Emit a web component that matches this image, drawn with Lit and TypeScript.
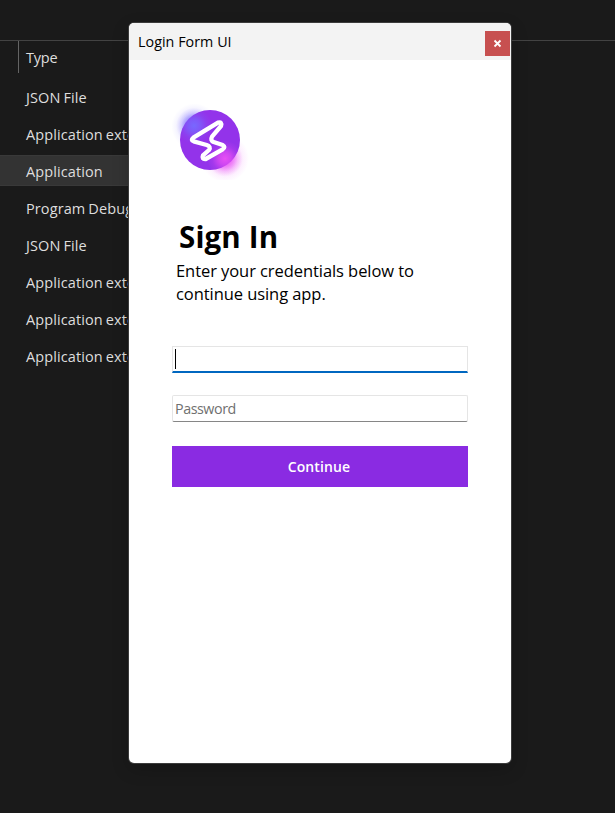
import { LitElement, html, css } from "lit";
import { customElement, property } from "lit/decorators.js";

@customElement("file-types")
class FileTypes extends LitElement {
  @property({ attribute: false }) rows: string[] = [];

  static styles = css`
    :host { display: block; padding-top: 40px; }
    .head {
      height: 39px; box-sizing: border-box; border-top: 1px solid #434343;
      display: flex; letter-spacing: -0.2px;
    }
    .head span {
      margin-left: 18px; padding-left: 7px; height: 32px; line-height: 33px;
      border-left: 1px solid #646464;
    }
    .row {
      width: 140px; height: 31px; line-height: 33px; margin-bottom: 6px; padding-left: 26px;
      box-sizing: border-box; white-space: nowrap; word-spacing: -0.9px;
    }
    .list { padding-top: 2px; }
    .selected { background: #333; box-shadow: inset 0 1px #393939, inset 0 -1px #393939; }
  `;

  render() {
    return html`
      <div class="head"><span>Type</span></div>
      <div class="list">
        ${this.rows.map((r) => html`<div class="row ${r === "Application" ? "selected" : ""}">${r}</div>`)}
      </div>
    `;
  }
}

@customElement("login-window")
class LoginWindow extends LitElement {
  static styles = css`
    :host {
      display: block; background: #fff; color: #000; border-radius: 5px;
      box-shadow: 0 0 0 1px #3c3c3c, 0 6px 18px rgba(0, 0, 0, 0.2);
      overflow: hidden;
    }
    .bar {
      height: 37px; background: #f3f3f3; display: flex; align-items: center;
      justify-content: space-between; padding: 0 1px 0 9px;
      box-sizing: border-box; font-size: 14.3px; letter-spacing: 0.04px;
    }
    .close {
      width: 25px; height: 25px; margin-top: 4px; background: #c75050;
      display: grid; place-items: center;
    }
    .content { padding: 40px 43px 0; }
    .logo { display: block; width: 80px; height: 80px; margin-left: -2px; }
    h1 {
      margin: 36px 0 0 7px; font-size: 29.5px; line-height: 42px;
      font-weight: 700; letter-spacing: 0.15px;
    }
    p {
      margin: 1px 0 0 4px; font-size: 16.5px; line-height: 23px;
      letter-spacing: -0.07px; white-space: nowrap;
    }
    .field {
      box-sizing: border-box; height: 27px; border: 1px solid #e5e5e5;
      border-radius: 2px; display: flex; align-items: center;
      padding-left: 2px; color: #707070; font-size: 14.3px;
      letter-spacing: -0.45px;
    }
    .user { margin-top: 41px; border-bottom: 2px solid #0067c0; border-radius: 0; }
    .pass { margin-top: 22px; border-bottom-color: #868686; }
    .caret { width: 1px; height: 20px; background: #000; }
    .continue {
      display: block; width: 100%; height: 41px; margin-top: 24px; padding: 0 2px 0 0;
      border: 0; background: #8a2be2; color: #fff;
      font: 600 14px "Open Sans", "Noto Sans", sans-serif; letter-spacing: 0.12px;
    }
  `;

  render() {
    return html`
      <div class="bar">
        <span>Login Form UI</span>
        <span class="close">
          <svg width="9" height="9" viewBox="0 0 9 9">
            <path d="M1.5 1.5 7.5 7.5M7.5 1.5 1.5 7.5" stroke="#fff" stroke-width="1.8" />
          </svg>
        </span>
      </div>
      <div class="content">
        <svg class="logo" viewBox="30 15 240 240">
          <defs>
            <radialGradient id="blue"><stop offset="0" stop-color="#7868ff" /><stop offset=".35" stop-color="#7868ff" stop-opacity=".7" /><stop offset=".7" stop-color="#7868ff" stop-opacity=".2" /><stop offset="1" stop-color="#7868ff" stop-opacity="0" /></radialGradient>
            <radialGradient id="pink"><stop offset="0" stop-color="#e84ff5" /><stop offset=".35" stop-color="#e84ff5" stop-opacity=".7" /><stop offset=".7" stop-color="#e84ff5" stop-opacity=".2" /><stop offset="1" stop-color="#e84ff5" stop-opacity="0" /></radialGradient>
          </defs>
          <circle cx="104" cy="95" r="70" fill="url(#blue)" opacity=".5" />
          <circle cx="195" cy="190" r="72" fill="url(#pink)" opacity=".5" />
          <circle cx="150" cy="135" r="90" fill="#9333ea" />
          <circle cx="102" cy="92" r="54" fill="url(#blue)" />
          <circle cx="195" cy="191" r="54" fill="url(#pink)" />
          <path
            d="M174 83 100 128Q91 135 101 139L140 150Q154 155 147 165L129 181Q124 193 137 192L188 163Q198 156 188 150L161 141Q150 136 156 125L183 93Q187 79 174 83Z"
            fill="none" stroke="#fff" stroke-width="13" stroke-linejoin="round" />
        </svg>
        <h1>Sign In</h1>
        <p>Enter your credentials below to<br />continue using app.</p>
        <div class="field user"><span class="caret"></span></div>
        <div class="field pass">Password</div>
        <button class="continue">Continue</button>
      </div>
    `;
  }
}

@customElement("app-root")
class AppRoot extends LitElement {
  static styles = css`
    :host {
      display: block; position: relative; width: 615px; height: 813px;
      overflow: hidden; background: #1a1a1a; color: #dedede;
      font: 14.5px "Open Sans", "Noto Sans", sans-serif; letter-spacing: 0.1px;
    }
    login-window {
      position: absolute; left: 129px; top: 23px; width: 382px; height: 740px;
    }
  `;

  render() {
    return html`
      <file-types .rows=${[
        "JSON File", "Application extension", "Application", "Program Debug Database",
        "JSON File", "Application extension", "Application extension", "Application extension",
      ]}></file-types>
      <login-window></login-window>
    `;
  }
}
